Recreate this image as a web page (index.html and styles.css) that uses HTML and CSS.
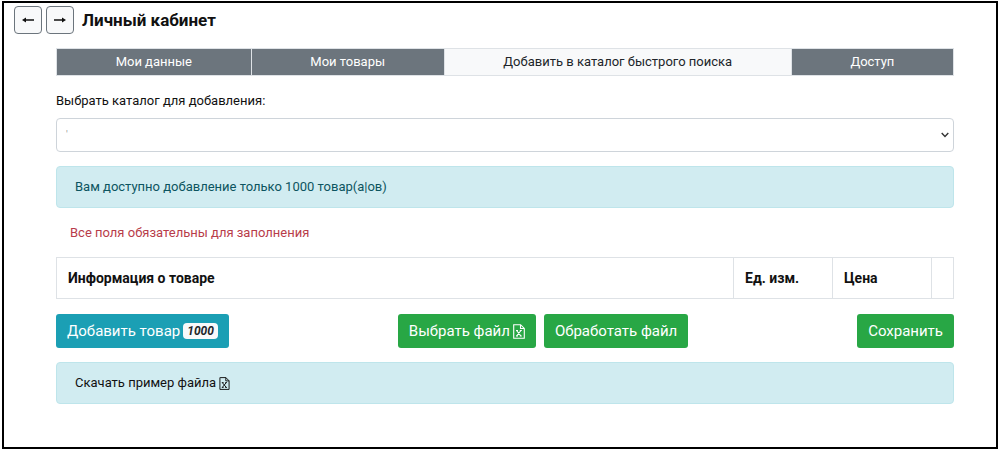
FILE: index.html
```html
<!DOCTYPE html>
<html lang="ru">
<head>
<meta charset="utf-8">
<title>Личный кабинет</title>
<link rel="stylesheet" href="styles.css">
</head>
<body>
<div class="frame">
  <header class="header">
    <button class="nav-btn" type="button" aria-label="Назад">
      <svg width="12" height="8" viewBox="0 0 12 8"><path d="M0 4l4-2.6v1.9h8v1.4H4v1.9z" fill="currentColor"/></svg>
    </button>
    <button class="nav-btn" type="button" aria-label="Вперёд">
      <svg width="12" height="8" viewBox="0 0 12 8"><path d="M12 4L8 1.4v1.9H0v1.4h8v1.9z" fill="currentColor"/></svg>
    </button>
    <h1 class="title">Личный кабинет</h1>
  </header>
  <main class="content">
    <nav class="tabs">
      <a class="tab" href="#data">Мои данные</a>
      <a class="tab" href="#goods">Мои товары</a>
      <a class="tab tab-active" href="#add" aria-current="page">Добавить в каталог быстрого поиска</a>
      <a class="tab" href="#access">Доступ</a>
    </nav>
    <label class="label" for="catalog">Выбрать каталог для добавления:</label>
    <div class="select-wrap">
      <select class="select" id="catalog"><option>'</option></select>
      <svg class="chevron" width="8" height="6" viewBox="0 0 8 6"><path d="M.7 1L4 4.4 7.3 1" fill="none" stroke="currentColor" stroke-width="1.4"/></svg>
    </div>
    <div class="alert alert-limit">Вам доступно добавление только 1000 товар(а|ов)</div>
    <p class="required">Все поля обязательны для заполнения</p>
    <table class="table">
      <thead>
        <tr><th>Информация о товаре</th><th class="col-unit">Ед. изм.</th><th class="col-price">Цена</th><th class="col-action"></th></tr>
      </thead>
    </table>
    <div class="actions">
      <button class="btn btn-info" type="button">Добавить товар <em class="badge">1000</em></button>
      <div class="file-actions">
        <button class="btn btn-success" type="button">Выбрать файл
          <svg class="icon-file" viewBox="0 0 12 15"><path d="M1 .7h6.6L11.3 4.4v9.9H.7V.7zM7.5.7v3.8h3.8M3.5 6.5l4.5 5.5M8 6.5L3.5 12M3 6.5h2M6.8 6.5h2M3 12h2M6.8 12h2" fill="none" stroke="currentColor" stroke-width="1.1"/></svg></button>
        <button class="btn btn-success" type="button">Обработать файл</button>
      </div>
      <button class="btn btn-success" type="button">Сохранить</button>
    </div>
    <div class="alert"><a class="download" href="#example">Скачать пример файла
      <svg class="icon-file icon-small" viewBox="0 0 12 15"><path d="M1 .7h6.6L11.3 4.4v9.9H.7V.7zM7.5.7v3.8h3.8M3.5 6.5l4.5 5.5M8 6.5L3.5 12M3 6.5h2M6.8 6.5h2M3 12h2M6.8 12h2" fill="none" stroke="currentColor" stroke-width="1.1"/></svg></a></div>
  </main>
</div>
</body>
</html>
```
FILE: styles.css
```css
* { box-sizing: border-box; }
body {
  margin: 0;
  padding: 1px 2px;
  background: #fff;
  color: #111;
  font: 13px/20px Roboto, "Liberation Sans", sans-serif;
}
.frame {
  min-height: calc(100vh - 2px);
  border: 2px solid #000;
}
.header {
  display: flex;
  align-items: center;
  gap: 4px;
  padding: 3px 10px 0;
}
.nav-btn {
  display: flex;
  align-items: center;
  justify-content: center;
  width: 28px;
  height: 28px;
  padding: 0;
  border: 1px solid #6c757d;
  border-radius: 4px;
  background: #f8f9fa;
  color: #111;
}
.title {
  margin: 0 4px;
  font-size: 17px;
  font-weight: 700;
  line-height: 28px;
}
.content { padding: 14px 42px 0 52px; }
.tabs {
  display: flex;
  border: 1px solid #dee2e6;
}
.tab {
  flex: 1 1 auto;
  padding: 3px 0;
  background: #6c757d;
  color: #fff;
  text-align: center;
  text-decoration: none;
}
.tab + .tab { border-left: 1px solid #dee2e6; }
.tab-active {
  background: #f8f9fa;
  color: #212529;
}
.label {
  display: block;
  margin: 15px 0 7px;
}
.select-wrap { position: relative; }
.select {
  display: block;
  width: 100%;
  height: 34px;
  padding: 0 9px;
  border: 1px solid #ced4da;
  border-radius: 4px;
  background: #fff;
  color: #999;
  font: inherit;
  font-size: 10px;
  appearance: none;
}
.chevron {
  position: absolute;
  top: 14px;
  right: 5px;
  color: #333;
  pointer-events: none;
}
.alert {
  padding: 10px 18px;
  border: 1px solid #bee5eb;
  border-radius: 4px;
  background: #d1ecf1;
  color: #0c5460;
}
.alert-limit { margin-top: 14px; }
.required {
  margin: 15px 14px 14px;
  color: #b83c4a;
}
.table {
  width: 100%;
  border-collapse: collapse;
  table-layout: fixed;
}
.table th {
  height: 41px;
  padding: 0 11px;
  border: 1px solid #dee2e6;
  text-align: left;
  font-size: 14px;
  font-weight: 700;
}
.col-unit, .col-price { width: 99px; }
.table .col-action { width: 22px; padding: 0; }
.actions {
  display: flex;
  justify-content: space-between;
  margin: 15px 0 14px;
}
.file-actions {
  display: flex;
  gap: 8px;
}
.btn {
  display: flex;
  align-items: center;
  gap: 3px;
  height: 34px;
  padding: 0 11px;
  border: 0;
  border-radius: 3px;
  color: #fff;
  font: 15px/20px Roboto, "Liberation Sans", sans-serif;
}
.btn-info { background: #1b9fb4; }
.btn-success { background: #28a745; }
.badge {
  padding: 0 4px;
  border-radius: 4px;
  background: #f8f9fa;
  color: #212529;
  font-size: 12px;
  font-weight: 700;
  line-height: 16px;
}
.icon-file {
  width: 12px;
  height: 15px;
}
.icon-small {
  width: 11px;
  height: 13px;
}
.download {
  display: flex;
  align-items: center;
  gap: 3px;
  color: #111;
  text-decoration: none;
}
```
